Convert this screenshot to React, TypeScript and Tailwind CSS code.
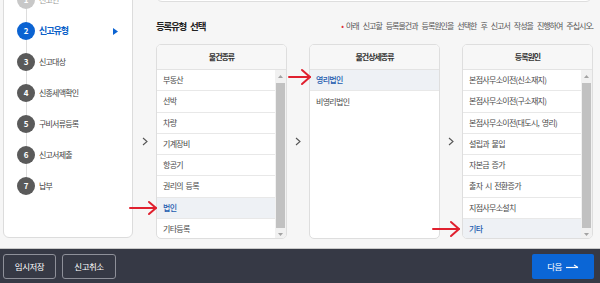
import React from "react";

const FONT = { fontFamily: '"Noto Sans CJK KR", "Noto Sans", sans-serif' };

type Step = { n: number; label: string; state: "done" | "active" | "todo" };
const steps: Step[] = [
  { n: 1, label: "신고인", state: "done" },
  { n: 2, label: "신고유형", state: "active" },
  { n: 3, label: "신고대상", state: "todo" },
  { n: 4, label: "신종세액확인", state: "todo" },
  { n: 5, label: "구비서류등록", state: "todo" },
  { n: 6, label: "신고서제출", state: "todo" },
  { n: 7, label: "납부", state: "todo" },
];

function Chevron() {
  return (
    <div className="w-[22px] flex items-center justify-center">
      <svg width="6" height="9" viewBox="0 0 6 9">
        <polyline points="1,1 5,4.5 1,8" fill="none" stroke="#555" strokeWidth="1.1" />
      </svg>
    </div>
  );
}

function Scrollbar() {
  return (
    <div className="w-[11px] bg-[#f1f1f1] flex flex-col">
      <div className="h-[13px] flex items-center justify-center">
        <svg width="5" height="3" viewBox="0 0 5 3">
          <polygon points="0,3 2.5,0 5,3" fill="#a3a3a3" />
        </svg>
      </div>
      <div className="flex-1 bg-[#c1c1c1] mx-[1px]" />
      <div className="h-[12px] flex items-center justify-center">
        <svg width="5" height="3" viewBox="0 0 5 3">
          <polygon points="0,0 2.5,3 5,0" fill="#a3a3a3" />
        </svg>
      </div>
    </div>
  );
}

function Panel({
  title,
  items,
  selected,
  scroll,
  lastBorder = false,
}: {
  title: string;
  items: string[];
  selected: string;
  scroll: boolean;
  lastBorder?: boolean;
}) {
  return (
    <div className="w-[131px] h-[195px] bg-white border border-[#dedede] rounded-[5px] overflow-hidden flex flex-col">
      <div className="h-[25px] shrink-0 bg-[#f7f7f7] border-b border-[#e3e3e3] flex items-center justify-center text-[8px] font-bold tracking-[-1px] text-[#333]">
        {title}
      </div>
      <div className="flex-1 flex">
        <div className="flex-1 flex flex-col">
          {items.map((it, i) => {
            const sel = it === selected;
            const last = i === items.length - 1;
            return (
              <div
                key={it}
                className={
                  "h-[21.25px] shrink-0 flex items-center pl-[6px] text-[8px] tracking-[-0.7px] [word-spacing:1.5px] " +
                  (last && !lastBorder ? "" : "border-b border-[#e8e8e8] ") +
                  (sel ? "bg-[#eef1f5] text-[#1d5caf] font-medium" : "text-[#4a4a4a]")
                }
              >
                {it}
              </div>
            );
          })}
        </div>
        {scroll && <Scrollbar />}
      </div>
    </div>
  );
}

export default function App() {
  return (
    <div className="relative w-[600px] h-[283px] overflow-hidden bg-[#f6f6f6] flex flex-col" style={FONT}>
      <div className="h-[248px] shrink-0 flex overflow-hidden">
        {/* sidebar */}
        <div className="ml-[3px] mt-[-24px] w-[130px] h-[262px] shrink-0 bg-white border border-[#dcdcdc] rounded-[6px]">
          <div className="relative pt-[7.5px] pl-[13px] pr-[13px]">
            <div className="absolute left-[22px] top-[23px] h-[187px] w-px bg-[#dddddd]" />
            {steps.map((s) => (
              <div key={s.n} className="relative h-[31px] flex items-center">
                <div
                  className={
                    "w-[18px] h-[18px] rounded-full flex items-center justify-center text-[8px] font-bold text-white " +
                    (s.state === "active" ? "bg-[#0b63d2]" : s.state === "done" ? "bg-[#c8c8c8]" : "bg-[#5a5a5a]")
                  }
                >
                  {s.n}
                </div>
                <div
                  className={
                    "ml-[4px] flex-1 " +
                    (s.state === "active"
                      ? "text-[9px] font-bold tracking-[-1px] text-[#0b5fc8]"
                      : s.state === "done"
                      ? "text-[8px] tracking-[-0.8px] text-[#9a9a9a]"
                      : "text-[8px] tracking-[-0.8px] text-[#444]")
                  }
                >
                  {s.label}
                </div>
                {s.state === "active" && (
                  <svg width="5" height="7" viewBox="0 0 5 7" className="mr-[1px]">
                    <polygon points="0,0 5,3.5 0,7" fill="#0b63d2" />
                  </svg>
                )}
              </div>
            ))}
          </div>
        </div>

        {/* main */}
        <div className="flex-1 flex flex-col">
          <div className="ml-[23px] w-[436px] h-[22px] mt-[-20px] shrink-0 bg-white border border-[#dedede] rounded-[6px]" />
          <div className="mt-[17px] h-[14px] pl-[23px] pr-[7px] flex items-center justify-between">
            <div className="text-[9.5px] font-bold tracking-[-1.2px] [word-spacing:3px] text-[#222]">등록유형 선택</div>
            <div className="text-[8px] tracking-[-1px] [word-spacing:3.2px] text-[#555] flex items-center">
              <span className="text-[#e0303a] mr-[3px]">•</span>
              <span>아래 신고할 등록물건과 등록원인을 선택한 후 신고서 작성을 진행하여 주십시오.</span>
            </div>
          </div>
          <div className="mt-[11px] ml-[1px] flex">
            <Chevron />
            <Panel
              title="물건종류"
              items={["부동산", "선박", "차량", "기계장비", "항공기", "권리의 등록", "법인", "기타등록"]}
              selected="법인"
              scroll
            />
            <Chevron />
            <Panel title="물건상세종류" items={["영리법인", "비영리법인"]} selected="영리법인" scroll={false} />
            <Chevron />
            <Panel
              title="등록원인"
              items={[
                "본점사무소이전(신소재지)",
                "본점사무소이전(구소재지)",
                "본점사무소이전(대도시, 영리)",
                "설립과 불입",
                "자본금 증가",
                "출자 시 전환증가",
                "지점사무소설치",
                "기타",
              ]}
              selected="기타"
              scroll
            />
          </div>
        </div>
      </div>

      {/* footer */}
      <div className="flex-1 bg-[#363945] border-t border-[#c9c9c9] flex items-center justify-between pl-[3px] pr-[6px]">
        <div className="flex gap-[6px]">
          <button className="w-[53px] h-[25px] border border-[#8e9099] rounded-[3px] text-white text-[8.5px] tracking-[-0.5px]">
            임시저장
          </button>
          <button className="w-[54px] h-[25px] border border-[#8e9099] rounded-[3px] text-white text-[8.5px] tracking-[-0.5px]">
            신고취소
          </button>
        </div>
        <button className="w-[62px] h-[25px] bg-[#0b66d6] rounded-[2px] text-white text-[8.5px] tracking-[-0.5px] flex items-center justify-center gap-[4px]">
          다음
          <svg width="13" height="5" viewBox="0 0 13 5">
            <line x1="0" y1="3.5" x2="12" y2="3.5" stroke="white" strokeWidth="1.2" />
            <polyline points="8,1 12,3.5" fill="none" stroke="white" strokeWidth="1.2" />
          </svg>
        </button>
      </div>

      {/* red annotation arrows */}
      <svg className="absolute left-0 top-0 pointer-events-none" width="600" height="283" viewBox="0 0 600 283">
        <g fill="none" stroke="#e0202e" strokeWidth="2" strokeLinecap="round" strokeLinejoin="round">
          <line x1="130" y1="208" x2="156" y2="208" />
          <polyline points="149,202 156,208 149,214" />
          <line x1="289" y1="77" x2="310" y2="77" />
          <polyline points="302,70 310,77 302,84" />
          <line x1="433" y1="229" x2="459" y2="229" />
          <polyline points="451,222 459,229 451,236" />
        </g>
      </svg>
    </div>
  );
}
